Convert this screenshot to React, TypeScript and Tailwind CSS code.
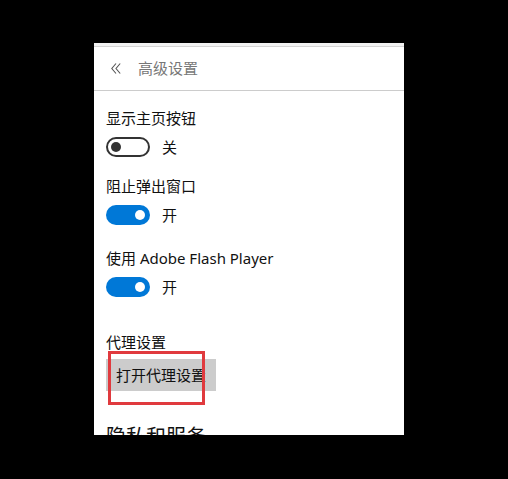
const font = { fontFamily: '"Noto Sans", "Noto Sans CJK SC", sans-serif' };

const Toggle = ({ on }: { on: boolean }) =>
  on ? (
    <div className="flex h-[20px] w-[44px] items-center justify-end rounded-full bg-[#0078d7] pr-[5px]">
      <div className="h-[10px] w-[10px] rounded-full bg-white" />
    </div>
  ) : (
    <div className="flex h-[20px] w-[44px] items-center rounded-full border-2 border-[#333333] pl-[3px]">
      <div className="h-[10px] w-[10px] rounded-full bg-[#333333]" />
    </div>
  );

const Setting = ({ label, on, className }: { label: string; on: boolean; className: string }) => (
  <div className={className}>
    <div className="text-[15px] leading-[20px] text-[#111]">{label}</div>
    <div className="mt-[9px] flex items-center gap-[12px]">
      <Toggle on={on} />
      <span className="text-[15px] leading-[20px] text-[#111]">{on ? "开" : "关"}</span>
    </div>
  </div>
);

export default function App() {
  return (
    <div className="h-[479px] w-[508px] bg-black pl-[94px] pt-[43px]" style={font}>
      <div className="relative h-[392px] w-[310px] overflow-hidden bg-white">
        <div className="h-[3px] bg-[#f2f2f2]" />
        <div className="h-px bg-[#d4d4d4]" />

        <div className="flex h-[44px] items-center border-b border-[#cccccc] pl-[17px]">
          <svg width="10" height="11" viewBox="0 0 10 11" fill="none" stroke="#555" strokeWidth="1.1">
            <path d="M5 0.5 L0.8 5.5 L5 10.5" />
            <path d="M9.2 0.5 L5 5.5 L9.2 10.5" />
          </svg>
          <span className="ml-[17px] text-[15px] text-[#777777]">高级设置</span>
        </div>

        <div className="px-[12px]">
          <Setting className="mt-[17px]" label="显示主页按钮" on={false} />
          <Setting className="mt-[19px]" label="阻止弹出窗口" on={true} />
          <Setting className="mt-[23px]" label="使用 Adobe Flash Player" on={true} />

          <div className="mt-[35px] text-[15px] leading-[20px] text-[#111]">代理设置</div>
          <div className="mt-[7px] flex h-[32px] w-[110px] items-center bg-[#cccccc] pl-[10px] text-[15px] text-[#111]">
            打开代理设置
          </div>

          <div className="mt-[32px] text-[20px] leading-[28px] text-[#111]">隐私和服务</div>
        </div>

        <div className="absolute left-[14px] top-[308px] h-[54px] w-[97px] border-[3px] border-[#e03a3e]" />
      </div>
    </div>
  );
}
